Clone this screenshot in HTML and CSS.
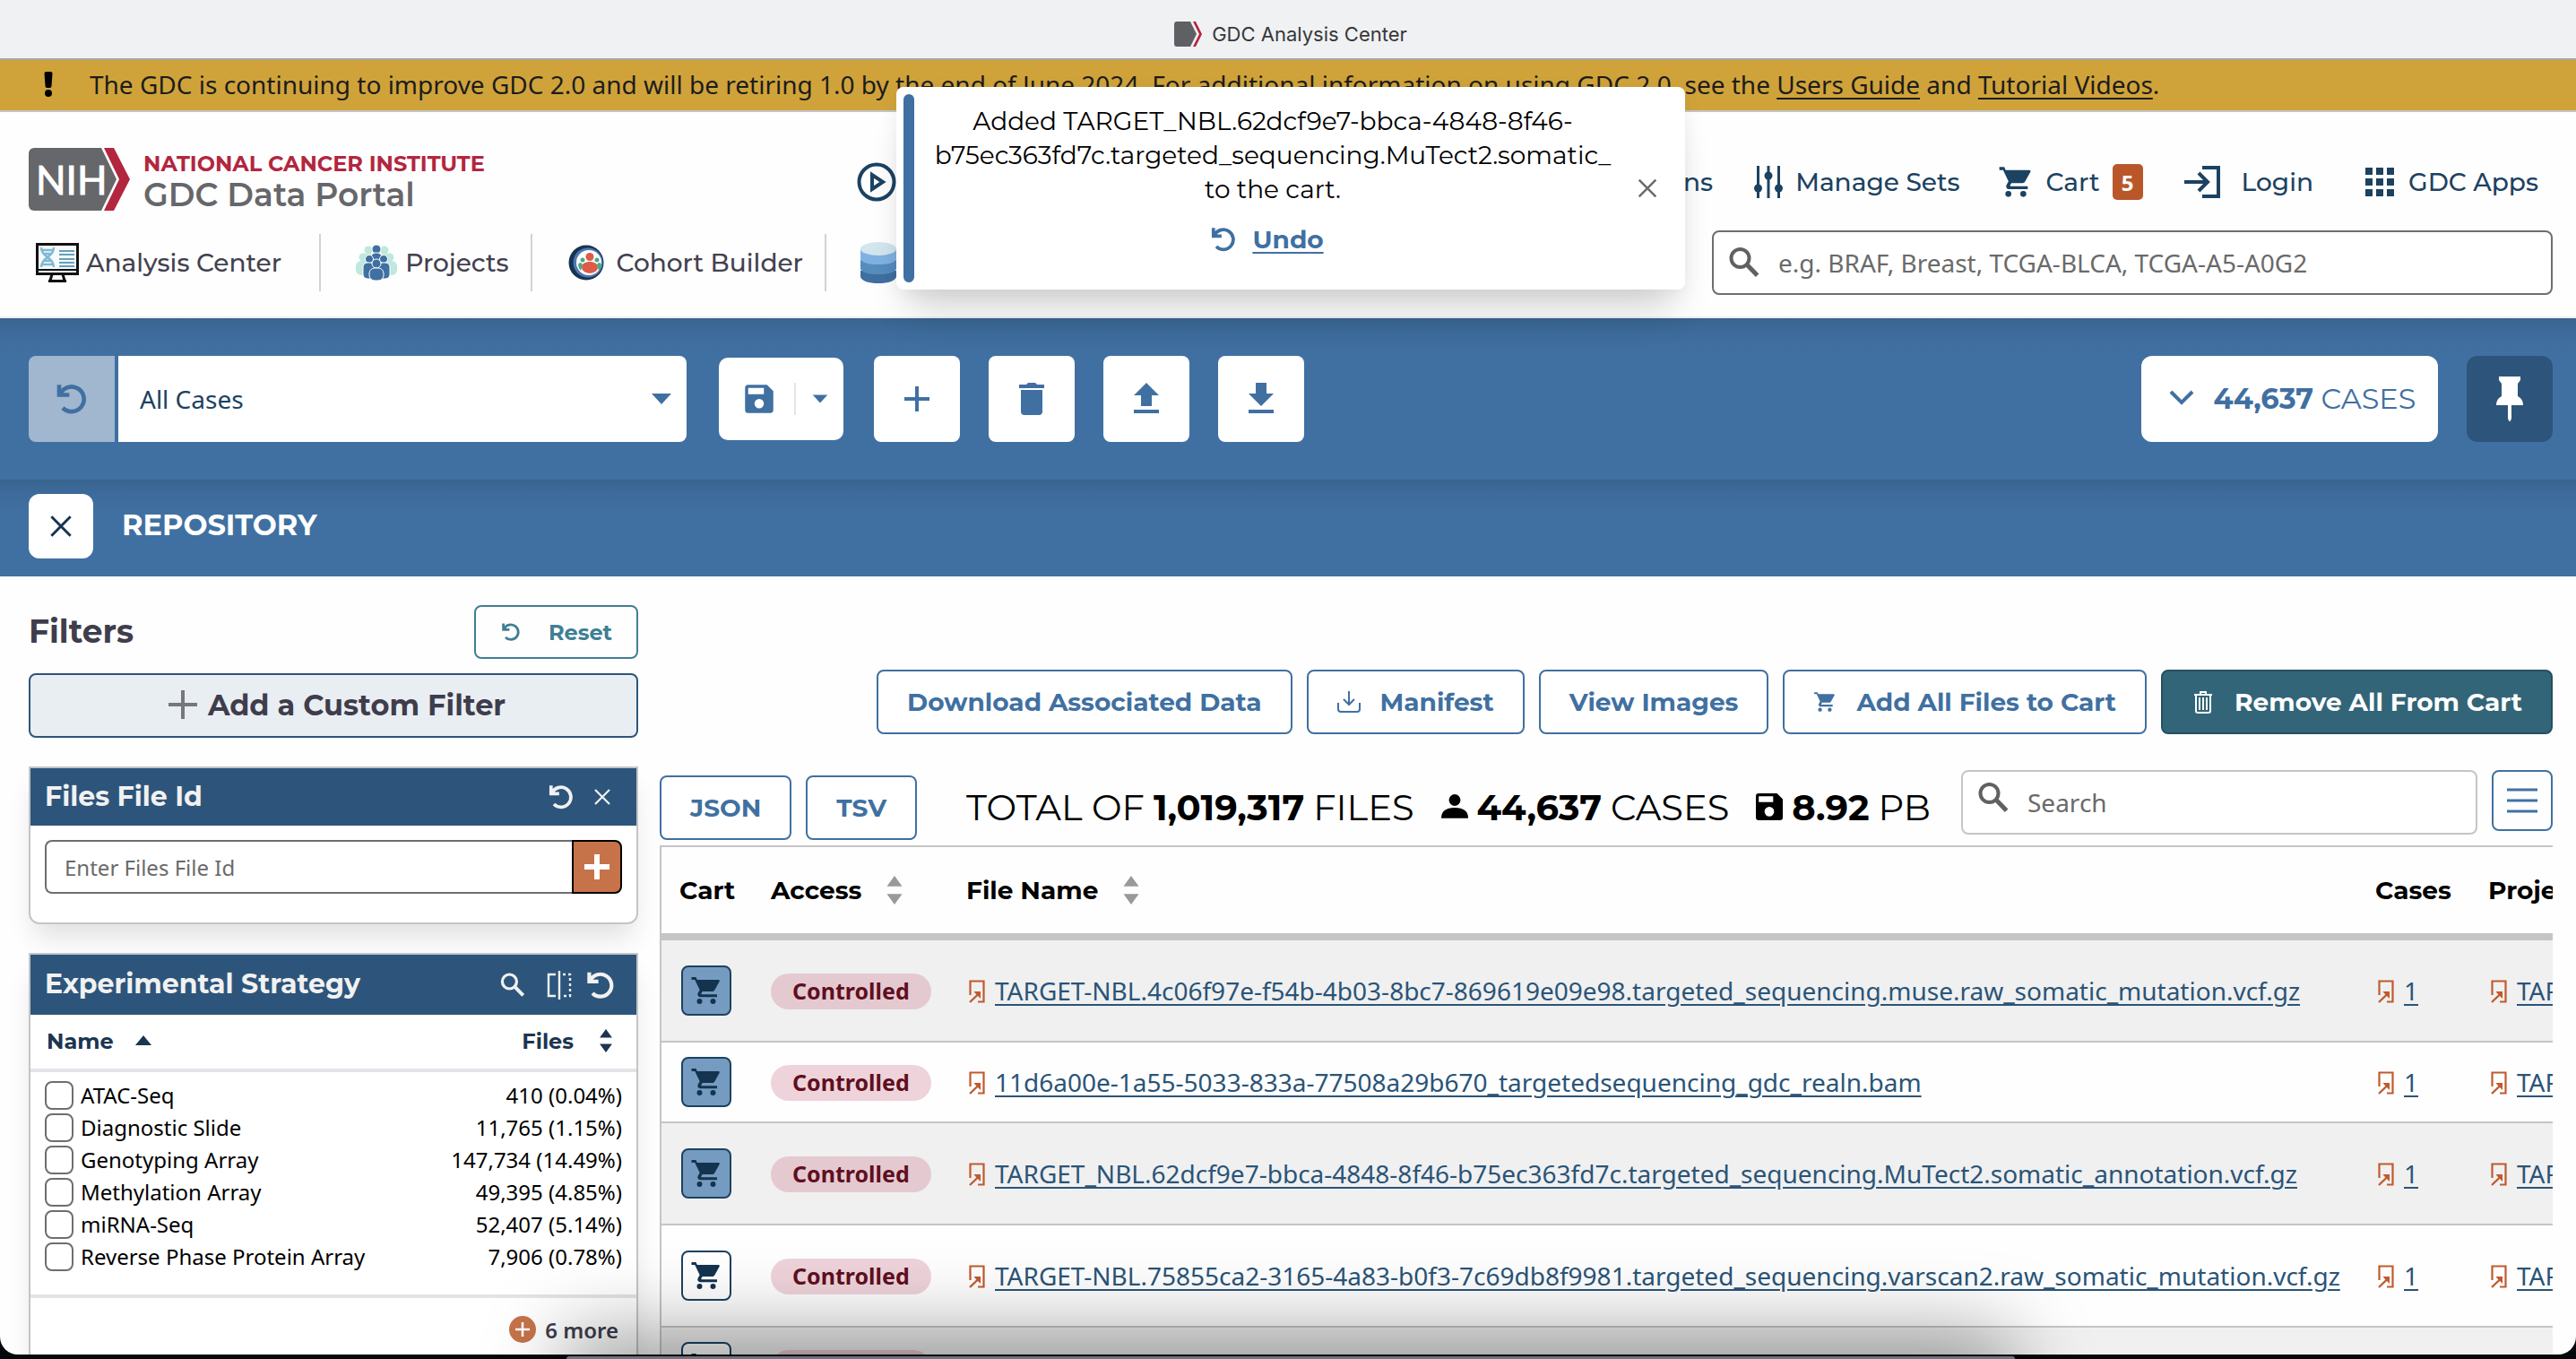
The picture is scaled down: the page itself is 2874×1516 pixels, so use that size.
FILE: index.html
```html
<!DOCTYPE html>
<html lang="en">
<head>
<meta charset="utf-8">
<title>GDC Analysis Center</title>
<link rel="stylesheet" href="styles.css">
</head>
<body>
<svg class="sprite" aria-hidden="true">
  <symbol id="undo" viewBox="0 0 24 24"><path d="M3.6 2.5v6.8h6.8M4.4 8.6A8.3 8.3 0 1 1 6 18" fill="none" stroke="currentColor" stroke-width="2.8"/></symbol>
  <symbol id="close" viewBox="0 0 24 24"><path d="M4 4l16 16M20 4L4 20" fill="none" stroke="currentColor" stroke-width="2.2"/></symbol>
  <symbol id="search" viewBox="0 0 24 24"><circle cx="9.3" cy="9" r="6" fill="none" stroke="currentColor" stroke-width="2.4"/><path d="M13.8 13.4l7 7.2" stroke="currentColor" stroke-width="3"/></symbol>
  <symbol id="cart" viewBox="0 0 24 24"><path fill="currentColor" d="M17 18a2 2 0 1 1 0 4 2 2 0 0 1 0-4M1 2h3.3l.9 2H21a.8.8 0 0 1 .8 1.2l-3.6 6.500c-.3.6-1 1-1.700 1H9.100l-.9 1.600c-.1.3 0 .5.3.500H20v2H7.500a1.900 1.900 0 0 1-1.700-2.900l1.300-2.400L3.500 4H1zm6 16a2 2 0 1 1 0 4 2 2 0 0 1 0-4"/></symbol>
  <symbol id="save" viewBox="0 0 24 24"><path fill="currentColor" fill-rule="evenodd" d="M5 3h12l4 4v12a2 2 0 0 1-2 2H5a2 2 0 0 1-2-2V5a2 2 0 0 1 2-2zm0 2v4h10V5zm7 7a3 3 0 1 0 0 6 3 3 0 0 0 0-6z"/></symbol>
  <symbol id="plus" viewBox="0 0 24 24"><path d="M12 3.600v16.800M3.600 12h16.800" stroke="currentColor" stroke-width="2.400"/></symbol>
  <symbol id="down" viewBox="0 0 24 12"><path fill="currentColor" d="M1 0h22L12 12z"/></symbol>
  <symbol id="sort" viewBox="0 0 16 30"><path fill="currentColor" d="M0 11L8 0l8 11zM0 19l8 11 8-11z"/></symbol>
  <symbol id="out" viewBox="0 0 20 28"><path d="M2.500 18V2.500h15v23H11" fill="none" stroke="currentColor" stroke-width="2.200"/><path d="M2 26L12.500 16" fill="none" stroke="currentColor" stroke-width="2.400"/><path d="M6.500 14H14v8l-2.500-2.500-3-3z" fill="currentColor"/></symbol>
  <symbol id="nih" viewBox="0 0 113 70"><path d="M6 0h75l17 35-17 35H6a6 6 0 0 1-6-6V6a6 6 0 0 1 6-6z" fill="#66676b"/><path d="M84 0h11l18 35-18 35H84l17-35z" fill="#b3263f"/></symbol>
</svg>

<div class="window">
  <div class="titlebar"><svg class="favicon" viewBox="0 0 32 28"><path d="M3 0h15l7 14-7 14H3q-3 0-3-3V3q0-3 3-3z" fill="#5f6063"/><path d="M21 0h3l7 14-7 14h-3l7-14z" fill="#b3263f"/></svg><span>GDC Analysis Center</span></div>

  <div class="banner" role="status">
    <svg class="bang" viewBox="0 0 12 28"><path d="M1.500 2a2 2 0 0 1 2-2h5a2 2 0 0 1 2 2l-1 14a2 2 0 0 1-2 2h-3a2 2 0 0 1-2-2z"/><circle cx="6" cy="24" r="4"/></svg>
    <p>The GDC is continuing to improve GDC 2.0 and will be retiring 1.0 by the end of June 2024. For additional information on using GDC 2.0, see the <a href="#guide">Users Guide</a> and <a href="#videos">Tutorial Videos</a>.</p>
  </div>

  <header class="header">
    <div class="header-top">
      <a class="logo" href="#home">
        <span class="nih-mark"><svg><use href="#nih"/></svg><b>NIH</b></span>
        <span class="logo-text"><span class="nci">NATIONAL CANCER INSTITUTE</span><span class="portal">GDC Data Portal</span></span>
      </a>
      <nav class="links-left">
        <a href="#video"><svg class="i44" viewBox="0 0 44 44" fill="none" stroke="currentColor" stroke-width="4"><circle cx="22" cy="22" r="19.500"/><path d="M17 14v16l12-8z"/></svg>Video Guides</a>
        <a href="#feedback">Send Feedback</a>
        <a href="#annotations">Browse Annotations</a>
      </nav>
      <nav class="links-right">
        <a href="#sets"><svg class="i32" viewBox="0 0 32 36" fill="none" stroke="currentColor" stroke-width="3"><path d="M4.500 0v36M16 0v36M27.500 0v36"/><g fill="currentColor" stroke="none"><circle cx="4.500" cy="25" r="4.500"/><circle cx="16" cy="11" r="4.500"/><circle cx="27.500" cy="25" r="4.500"/></g></svg>Manage Sets</a>
        <a href="#cart"><svg class="i40"><use href="#cart"/></svg>Cart<span class="badge">5</span></a>
        <a class="login" href="#login"><svg class="i40" viewBox="0 0 40 36" fill="none" stroke="currentColor" stroke-width="4"><path d="M20 2h18v32H20M0 18h26M16 8l10 10-10 10"/></svg>Login</a>
        <a class="apps" href="#apps"><svg class="i32" viewBox="0 0 32 32" fill="currentColor"><path d="M0 0h8v8H0zM12 0h8v8h-8zM24 0h8v8h-8zM0 12h8v8H0zM12 12h8v8h-8zM24 12h8v8h-8zM0 24h8v8H0zM12 24h8v8h-8zM24 24h8v8h-8z"/></svg>GDC Apps</a>
      </nav>
    </div>
    <div class="header-bottom">
      <nav class="tabs">
        <a href="#analysis"><svg class="i48" viewBox="0 0 48 44" fill="none"><path d="M1.500 1.500h45v33h-45z" fill="#f5fafc" stroke="#111" stroke-width="3"/><path d="M1 30h46" stroke="#111" stroke-width="2"/><path d="M18 35l-2 7M30 35l2 7M14 42.500h20" stroke="#111" stroke-width="3"/><path d="M6 5c0 11 14 11 14 22M20 5c0 11-14 11-14 22M7 8h12M7 24h12M9 12h8M9 20h8" stroke="#7fb9d4" stroke-width="2.400"/><path d="M26 9h17M26 13h17M26 18h17M26 22h17M26 26h17" stroke="#67a0ba" stroke-width="2"/></svg>Analysis Center</a>
        <a href="#projects"><svg class="i48" viewBox="0 0 48 40"><g fill="#bfe8de"><circle cx="15" cy="6" r="4.500"/><circle cx="33" cy="6" r="4.500"/><circle cx="9" cy="14" r="4.500"/><circle cx="39" cy="14" r="4.500"/><rect x="1" y="18" width="14" height="16" rx="6"/><rect x="33" y="18" width="14" height="16" rx="6"/><rect x="10" y="10" width="10" height="14" rx="4"/><rect x="28" y="10" width="10" height="14" rx="4"/></g><g fill="#3f70a1" stroke="#fff" stroke-width="1"><circle cx="24" cy="5" r="5"/><rect x="18" y="9" width="12" height="14" rx="5"/><circle cx="16" cy="16" r="4.500"/><circle cx="32" cy="16" r="4.500"/><rect x="9" y="20" width="13" height="18" rx="5"/><rect x="26" y="20" width="13" height="18" rx="5"/><circle cx="24" cy="21" r="5"/><rect x="16" y="26" width="16" height="14" rx="6"/></g></svg>Projects</a>
        <a href="#cohort"><svg class="i48" viewBox="-2 -2 48 44"><circle cx="20" cy="20" r="19.500" fill="#173450"/><circle cx="22" cy="20" r="16.500" fill="#4e78b5"/><circle cx="23" cy="20" r="14" fill="#fff"/><circle cx="24" cy="13.500" r="4.500" fill="#dc5c48"/><path d="M15 25c0-8 18-8 18 0 0 9-18 9-18 0z" fill="#dc5c48"/><g fill="#4aa984"><circle cx="16" cy="17" r="2.500"/><circle cx="32" cy="17" r="2.500"/><path d="M11 22q2-4 5 0l-2 7q-3-3-3-7zM37 22q-2-4-5 0l2 7q3-3 3-7z"/></g></svg>Cohort Builder</a>
        <a href="#repository"><svg class="db" viewBox="0 0 40 46"><path d="M0 32h40v7q-3 7-20 7T0 39z" fill="#3f6fa0"/><path d="M0 20h40v10q-3 6-20 6T0 30z" fill="#578cbf"/><path d="M0 8h40v11q-3 6-20 6T0 19z" fill="#7fb2e2"/><ellipse cx="20" cy="7.500" rx="20" ry="7.500" fill="#d3e6ee"/></svg></a>
      </nav>
      <label class="quick-search"><svg class="i40"><use href="#search"/></svg><input type="text" aria-label="Quick search" placeholder="e.g. BRAF, Breast, TCGA-BLCA, TCGA-A5-A0G2"></label>
    </div>
  </header>

  <section class="cohort-bar">
    <div class="cohort-picker">
      <button class="discard" aria-label="Discard changes"><svg class="i40"><use href="#undo"/></svg></button>
      <div class="select-wrap"><select aria-label="Cohort"><option>All Cases</option></select><svg class="caret"><use href="#down"/></svg></div>
    </div>
    <button class="save-btn" aria-label="Save cohort"><svg class="disk"><use href="#save"/></svg><i></i><svg class="caret-sm"><use href="#down"/></svg></button>
    <div class="tools">
      <button class="square" aria-label="Add cohort"><svg class="i40"><use href="#plus"/></svg></button>
      <button class="square" aria-label="Delete cohort"><svg class="i40" viewBox="0 0 40 40" fill="currentColor"><path d="M6 4h8l2-2h8l2 2h8v4H6zM8 10h24v24a4 4 0 0 1-4 4H12a4 4 0 0 1-4-4z"/></svg></button>
      <button class="square" aria-label="Import cohort"><svg class="i40" viewBox="0 0 40 40" fill="currentColor"><path d="M20 2l14 14h-8v12H14V16H6zM6 32h28v4H6z"/></svg></button>
      <button class="square" aria-label="Export cohort"><svg class="i40" viewBox="0 0 40 40" fill="currentColor"><path d="M14 2h12v12h8L20 28 6 14h8zM6 32h28v4H6z"/></svg></button>
    </div>
    <button class="cases-btn"><svg class="chev" viewBox="0 0 28 18"><path d="M2 2l12 12L26 2" fill="none" stroke="currentColor" stroke-width="4"/></svg><span><b>44,637</b> CASES</span></button>
    <button class="pin" aria-label="Pin cohort bar"><svg viewBox="0 0 30 50" fill="#fff"><path d="M3 0h24v4l-3 4v14q6 3 6 10H0q0-7 6-10V8L3 4zM13 32h4v15l-2 4-2-4z"/></svg></button>
  </section>

  <section class="app-bar">
    <button class="app-close" aria-label="Close"><svg><use href="#close"/></svg></button>
    <h1>REPOSITORY</h1>
  </section>

  <main class="content">
    <aside class="filters">
      <div class="filters-head"><h2>Filters</h2><button class="reset"><svg><use href="#undo"/></svg>Reset</button></div>
      <button class="custom-filter"><svg viewBox="0 0 32 32"><path d="M16 0v32M0 16h32" stroke="currentColor" stroke-width="4"/></svg>Add a Custom Filter</button>

      <section class="card">
        <div class="card-head"><h3>Files File Id</h3><button aria-label="Reset"><svg class="i32"><use href="#undo"/></svg></button><button aria-label="Remove"><svg class="i24"><use href="#close"/></svg></button></div>
        <div class="card-form"><input type="text" aria-label="Files File Id" placeholder="Enter Files File Id"><button aria-label="Add"><svg class="i32" viewBox="0 0 32 32"><path d="M16 2v28M2 16h28" stroke="currentColor" stroke-width="6"/></svg></button></div>
      </section>

      <section class="card strategy">
        <div class="card-head"><h3>Experimental Strategy</h3><button class="find" aria-label="Search"><svg class="i32"><use href="#search"/></svg></button><button aria-label="Flip"><svg class="i32" viewBox="0 0 32 32" fill="none" stroke="currentColor" stroke-width="2.400"><path d="M12 4H4v24h8M16 0v32"/><path d="M20 4h8v24h-8" stroke-dasharray="3 3"/></svg></button><button aria-label="Reset"><svg class="i36"><use href="#undo"/></svg></button></div>
        <div class="facet-head"><button>Name<svg viewBox="0 0 24 12"><path d="M0 11L9 0l9 11z"/></svg></button><button>Files<svg class="sort"><use href="#sort"/></svg></button></div>
        <ul class="facet">
          <li><label><input type="checkbox">ATAC-Seq</label><span>410 (0.04%)</span></li>
          <li><label><input type="checkbox">Diagnostic Slide</label><span>11,765 (1.15%)</span></li>
          <li><label><input type="checkbox">Genotyping Array</label><span>147,734 (14.49%)</span></li>
          <li><label><input type="checkbox">Methylation Array</label><span>49,395 (4.85%)</span></li>
          <li><label><input type="checkbox">miRNA-Seq</label><span>52,407 (5.14%)</span></li>
          <li><label><input type="checkbox">Reverse Phase Protein Array</label><span>7,906 (0.78%)</span></li>
        </ul>
        <div class="facet-foot"><button><svg viewBox="0 0 30 30"><circle cx="15" cy="15" r="15" fill="#c6734a"/><path d="M15 7v16M7 15h16" stroke="#fff" stroke-width="2.500"/></svg>6 more</button></div>
      </section>
    </aside>

    <div class="main">
      <div class="actions">
        <button>Download Associated Data</button>
        <button class="manifest"><svg viewBox="0 0 26 26" fill="none" stroke="currentColor" stroke-width="2"><path d="M13 1v15M7 10l6 6 6-6M1 14v7q0 3 3 3h18q3 0 3-3v-7"/></svg>Manifest</button>
        <button>View Images</button>
        <button class="add-all"><svg><use href="#cart"/></svg>Add All Files to Cart</button>
        <button class="remove"><svg viewBox="0 0 26 26" fill="none" stroke="currentColor" stroke-width="2"><path d="M3 5h20M10 5V2h6v3M5 5v18q0 2 2 2h12q2 0 2-2V5M9 8v14M13 8v14M17 8v14"/></svg>Remove All From Cart</button>
      </div>
      <div class="table-tools">
        <button class="export">JSON</button>
        <button class="export">TSV</button>
        <p class="totals"><span>TOTAL OF <b>1,019,317</b> FILES</span><span><svg viewBox="0 0 28 28"><circle cx="14" cy="7" r="6"/><path d="M0 26q0-11 14-11t14 11z"/></svg><b>44,637</b> CASES</span><span><svg viewBox="0 0 28 28"><path fill-rule="evenodd" d="M3 0h19l6 6v19a3 3 0 0 1-3 3H3a3 3 0 0 1-3-3V3a3 3 0 0 1 3-3zm0 3v6h15V3zm11 11a5 5 0 1 0 0 10 5 5 0 0 0 0-10z"/></svg><b>8.92</b> PB</span></p>
        <label class="table-search"><svg class="i40"><use href="#search"/></svg><input type="text" aria-label="Search table" placeholder="Search"></label>
        <button class="columns" aria-label="Columns"><svg viewBox="0 0 34 28"><path d="M0 2h34M0 14h34M0 26h34" stroke="currentColor" stroke-width="3"/></svg></button>
      </div>
      <div class="table-wrap">
        <table>
          <colgroup><col class="c-cart"><col class="c-access"><col><col class="c-cases"><col class="c-project"></colgroup>
          <thead><tr><th>Cart</th><th>Access<svg class="sort"><use href="#sort"/></svg></th><th>File Name<svg class="sort"><use href="#sort"/></svg></th><th>Cases</th><th>Project</th></tr></thead>
          <tbody>
            <tr class="tall"><td><button class="cart-btn in" aria-label="Remove from cart"><svg><use href="#cart"/></svg></button></td><td><span class="pill">Controlled</span></td><td><svg class="out"><use href="#out"/></svg><a href="#f1">TARGET-NBL.4c06f97e-f54b-4b03-8bc7-869619e09e98.targeted_sequencing.muse.raw_somatic_mutation.vcf.gz</a></td><td><svg class="out"><use href="#out"/></svg><a href="#c1">1</a></td><td><svg class="out"><use href="#out"/></svg><a href="#p1">TARGET-NBL</a></td></tr>
            <tr><td><button class="cart-btn in" aria-label="Remove from cart"><svg><use href="#cart"/></svg></button></td><td><span class="pill">Controlled</span></td><td><svg class="out"><use href="#out"/></svg><a href="#f2">11d6a00e-1a55-5033-833a-77508a29b670_targetedsequencing_gdc_realn.bam</a></td><td><svg class="out"><use href="#out"/></svg><a href="#c2">1</a></td><td><svg class="out"><use href="#out"/></svg><a href="#p2">TARGET-NBL</a></td></tr>
            <tr class="tall"><td><button class="cart-btn in" aria-label="Remove from cart"><svg><use href="#cart"/></svg></button></td><td><span class="pill">Controlled</span></td><td><svg class="out"><use href="#out"/></svg><a href="#f3">TARGET_NBL.62dcf9e7-bbca-4848-8f46-b75ec363fd7c.targeted_sequencing.MuTect2.somatic_annotation.vcf.gz</a></td><td><svg class="out"><use href="#out"/></svg><a href="#c3">1</a></td><td><svg class="out"><use href="#out"/></svg><a href="#p3">TARGET-NBL</a></td></tr>
            <tr class="tall"><td><button class="cart-btn" aria-label="Add to cart"><svg><use href="#cart"/></svg></button></td><td><span class="pill">Controlled</span></td><td><svg class="out"><use href="#out"/></svg><a href="#f4">TARGET-NBL.75855ca2-3165-4a83-b0f3-7c69db8f9981.targeted_sequencing.varscan2.raw_somatic_mutation.vcf.gz</a></td><td><svg class="out"><use href="#out"/></svg><a href="#c4">1</a></td><td><svg class="out"><use href="#out"/></svg><a href="#p4">TARGET-NBL</a></td></tr>
            <tr><td><button class="cart-btn" aria-label="Add to cart"><svg><use href="#cart"/></svg></button></td><td><span class="pill">Controlled</span></td><td></td><td></td><td></td></tr>
          </tbody>
        </table>
      </div>
    </div>
  </main>

  <div class="toast" role="alert">
    <div class="toast-bar"></div>
    <div class="toast-body"><p>Added TARGET_NBL.62dcf9e7-bbca-4848-8f46-<br>b75ec363fd7c.targeted_sequencing.MuTect2.somatic_<br>to the cart.</p><button class="undo"><svg class="i32"><use href="#undo"/></svg><span>Undo</span></button></div>
    <button class="toast-close" aria-label="Dismiss"><svg class="i28"><use href="#close"/></svg></button>
  </div>
  <div class="dock-shade"></div>
</div>
<div class="dock"></div>
</body>
</html>
```
FILE: styles.css
```css
* { box-sizing: border-box; }
body { margin: 0; height: 100vh; overflow: hidden; background: #05070c; font-family: "Noto Sans", sans-serif; color: #000; position: relative; }
p, h1, h2, h3, ul { margin: 0; padding: 0; }
button { font: inherit; color: inherit; background: none; border: 0; padding: 0; display: flex; align-items: center; justify-content: center; flex: none; }
input, select { font: inherit; color: inherit; }
svg { flex: none; display: block; }
.sprite { position: absolute; width: 0; height: 0; }
.i24 { width: 24px; height: 24px; }
.i28 { width: 28px; height: 28px; }
.i32 { width: 32px; height: 36px; }
.i36 { width: 36px; height: 36px; }
.i40 { width: 40px; height: 40px; }
.i44 { width: 44px; height: 44px; }
.i48 { width: 48px; height: 44px; }

.window { position: relative; height: calc(100vh - 5px); overflow: hidden; background: #fefefe; border-radius: 0 0 20px 20px; }

.titlebar { height: 67px; padding: 10px 0 0 6px; display: flex; justify-content: center; align-items: center; gap: 10px; background: #f0f1f3; border-bottom: 2px solid #a4a5a8; font: 400 22px Inter, sans-serif; color: #37383a; }
.favicon { width: 32px; height: 28px; }

.banner { height: 58px; display: flex; align-items: center; padding: 0 0 2px 48px; gap: 40px; background: #d0a33a; border-bottom: 2px solid #c5c5c5; font-size: 28px; color: #1c1c1c; }
.banner a { color: inherit; text-underline-offset: 4px; }
.bang { width: 12px; height: 28px; }

.header { position: relative; padding: 40px 26px 24px 32px; border-bottom: 2px solid #f0f0f0; font-family: Montserrat, Inter, sans-serif; font-size: 28px; font-weight: 500; }
.header a { display: flex; align-items: center; text-decoration: none; color: inherit; }
.header-top { display: flex; align-items: center; height: 76px; color: #1c4262; }
.header .logo { gap: 15px; width: 924px; height: 70px; align-self: flex-start; }
.nih-mark { display: grid; width: 113px; height: 70px; }
.nih-mark > * { grid-area: 1 / 1; }
.nih-mark svg { width: 113px; height: 70px; }
.nih-mark b { align-self: center; padding-left: 8px; color: #fff; font: 400 44px/48px Lato, sans-serif; -webkit-text-stroke: 1px #fff; }
.logo-text { display: flex; flex-direction: column; padding-top: 6px; }
.nci { color: #b3263f; font-weight: 700; font-size: 24px; line-height: 28px; }
.portal { color: #66676b; font-weight: 600; font-size: 36px; line-height: 40px; }
.links-left { flex: 1; display: flex; justify-content: space-between; white-space: nowrap; }
.links-left a { gap: 16px; }
.links-right { display: flex; gap: 42px; padding: 0 16px 0 46px; }
.links-right a { gap: 14px; }
.links-right a.login { margin-left: 4px; gap: 24px; }
.links-right a.apps { margin-left: 16px; gap: 16px; }
.badge { display: grid; place-items: center; width: 34px; height: 40px; background: #b9572b; color: #fff; border-radius: 5px; font: 700 24px "Noto Sans", sans-serif; }
.header-bottom { display: flex; align-items: center; justify-content: space-between; margin-top: 16px; }
.tabs { display: flex; color: #43414f; }
.tabs a { height: 64px; gap: 8px; padding: 0 24px 0 38px; border-right: 2px solid #cfd2d8; }
.tabs a:first-child { padding: 0 42px 0 8px; }
.tabs a:last-child { border: 0; }
.db { width: 40px; height: 46px; }
.quick-search { display: flex; align-items: center; gap: 18px; width: 938px; height: 72px; padding-left: 14px; border: 2px solid #6e6e6e; border-radius: 8px; color: #616161; background: #fff; font-family: "Noto Sans", sans-serif; font-size: 28px; font-weight: 400; }
.quick-search input, .table-search input { flex: 1; border: 0; outline: 0; background: none; padding: 0; }
input::placeholder { color: #6a6a6a; opacity: 1; }

.cohort-bar, .app-bar { background: linear-gradient(#38648f, #3d6b9b 16px, #4070a1 36px); }
.cohort-bar { height: 180px; display: flex; align-items: center; padding: 0 26px 0 32px; color: #4070a1; }
.cohort-picker { display: flex; gap: 4px; width: 734px; margin-right: 36px; height: 96px; }
.discard { width: 96px; background: #a1b6cf; border-radius: 8px 0 0 8px; }
.select-wrap { flex: 1; display: grid; align-items: center; background: #fff; border-radius: 0 8px 8px 0; color: #1c4262; font-size: 28px; }
.select-wrap > * { grid-area: 1 / 1; }
.select-wrap select { appearance: none; border: 0; background: none; height: 96px; padding: 0 24px; }
.caret { width: 24px; height: 14px; justify-self: end; margin-right: 16px; color: #4070a1; }
.save-btn { width: 139px; height: 92px; justify-content: flex-start; gap: 18px; padding-left: 24px; margin-right: 34px; background: #fff; border-radius: 10px; }
.save-btn .disk { width: 42px; height: 42px; }
.save-btn i { width: 2px; height: 36px; background: #e3e5e8; }
.save-btn .caret-sm { width: 18px; height: 10px; }
.tools { display: flex; gap: 32px; }
.square { width: 96px; height: 96px; background: #fff; border-radius: 8px; }
.cases-btn { margin-left: auto; width: 331px; height: 96px; gap: 22px; padding: 0 0 2px 6px; background: #fff; border-radius: 12px; font: 400 32px Montserrat, Inter, sans-serif; }
.chev { width: 28px; height: 18px; }
.pin { width: 96px; height: 96px; margin-left: 32px; background: #2d557b; border-radius: 12px; }
.pin svg { width: 30px; height: 50px; }

.app-bar { height: 108px; display: flex; align-items: center; gap: 32px; padding: 0 32px 4px; color: #fff; }
.app-close { width: 72px; height: 72px; background: #fff; border-radius: 12px; color: #14334f; }
.app-close svg { width: 32px; height: 32px; }
h1 { font: 700 32px Montserrat, Inter, sans-serif; padding-bottom: 4px; }

.content { display: flex; gap: 24px; padding: 32px 26px 0 32px; }
.filters { width: 680px; flex: none; }
.filters-head { display: flex; justify-content: space-between; align-items: center; height: 60px; }
h2 { font: 700 36px Montserrat, Inter, sans-serif; color: #3f3d4c; padding-bottom: 2px; }
.reset { width: 183px; height: 60px; gap: 30px; border: 2px solid #3f7f93; border-radius: 8px; color: #3f7f93; font: 700 24px Montserrat, Inter, sans-serif; }
.reset svg { width: 24px; height: 24px; }
.custom-filter { width: 100%; height: 72px; margin-top: 16px; gap: 12px; padding: 0 0 2px 8px; background: #e9eef3; border: 2px solid #2d557b; border-radius: 8px; font: 700 32px Montserrat, Inter, sans-serif; color: #3f3d4c; }
.custom-filter svg { width: 32px; height: 32px; color: #77777c; }
.card { margin-top: 32px; border: 2px solid #c5c5c5; border-radius: 0 0 12px 12px; background: #fff; box-shadow: 0 20px 30px -6px rgba(0,0,0,.12); }
.card-head { display: flex; align-items: center; gap: 18px; height: 64px; padding: 0 26px 0 16px; background: #2d557b; color: #f1f1f1; }
.strategy .card-head { height: 67px; gap: 12px; padding-right: 22px; }
.find { margin-right: 8px; }
.card-head h3 { flex: 1; font: 700 30px Montserrat, Inter, sans-serif; padding-bottom: 2px; }
.card-form { display: flex; padding: 16px 16px 32px; height: 108px; font-size: 24px; }
.card-form input { flex: 1; min-width: 0; border: 2px solid #6e6e6e; border-right: 0; border-radius: 8px 0 0 8px; padding: 0 20px; outline: 0; background: #fff; }
.card-form button { width: 56px; border: 2px solid #000; border-radius: 0 8px 8px 0; background: #c6734a; color: #fff; }
.facet-head { display: flex; justify-content: space-between; height: 64px; padding: 0 26px 2px 18px; border-bottom: 4px solid #e3e3e8; color: #1c3550; font: 700 24px Montserrat, Inter, sans-serif; }
.facet-head button { gap: 24px; }
.facet-head button svg { width: 24px; height: 12px; fill: currentColor; }
.facet-head button .sort { width: 16px; height: 26px; margin-left: 4px; }
.facet { list-style: none; height: 252px; padding: 8px 16px 0; border-bottom: 4px solid #e3e3e8; font-size: 24px; }
.facet li { display: flex; justify-content: space-between; height: 36px; line-height: 36px; }
.facet label { display: flex; align-items: center; gap: 8px; }
.facet input { appearance: none; width: 32px; height: 32px; margin: 0; border: 2px solid #6e6e6e; border-radius: 8px; background: #fff; }
.facet-foot { height: 90px; display: flex; justify-content: flex-end; padding: 0 20px 20px 0; font-size: 24px; font-weight: 600; color: #3f3d4c; }
.facet-foot button { gap: 10px; }
.facet-foot svg { width: 30px; height: 30px; }

.main { flex: 1; min-width: 0; font-family: Montserrat, Inter, sans-serif; }
.actions { display: flex; justify-content: flex-end; gap: 16px; padding-top: 72px; }
.actions button, .export { height: 72px; padding: 0 32px; border: 2px solid #4070a1; border-radius: 8px; color: #4070a1; background: #fff; font-weight: 700; font-size: 28px; gap: 22px; }
.actions svg { width: 26px; height: 26px; }
.actions .remove { background: #336578; border-color: #24505f; color: #fff; }
.table-tools { display: flex; gap: 16px; margin-top: 40px; height: 84px; }
.export { margin-top: 6px; }
.totals { flex: 1; display: flex; justify-content: flex-end; align-items: center; gap: 30px; height: 82px; font-size: 40px; padding-right: 18px; }
.totals span { display: flex; align-items: center; gap: 10px; white-space: nowrap; }
.totals svg { width: 30px; height: 30px; }
.table-search { width: 576px; height: 72px; display: flex; align-items: center; gap: 18px; padding: 0 14px; border: 2px solid #c5c5c5; border-radius: 8px; background: #fff; font-family: "Noto Sans", sans-serif; font-size: 28px; color: #616161; }
.table-search svg { margin-bottom: 10px; }
.columns { width: 68px; height: 68px; border: 2px solid #4070a1; border-radius: 8px; color: #4070a1; }
.columns svg { width: 34px; height: 28px; }
.table-wrap { overflow: hidden; border: solid #c5c5c5; border-width: 2px 0 0 2px; }
table { table-layout: fixed; width: calc(100% + 160px); border-collapse: separate; border-spacing: 0; }
.c-cart { width: 102px; } .c-access { width: 218px; } .c-cases { width: 126px; } .c-project { width: 252px; }
th { height: 104px; padding: 0 0 0 20px; text-align: left; font-weight: 700; font-size: 28px; border-bottom: 8px solid #c5c5c5; white-space: nowrap; }
th .sort { display: inline-block; vertical-align: -6px; width: 18px; height: 32px; margin-left: 28px; color: #999; }
td { height: 90px; padding: 0 0 0 22px; border-bottom: 2px solid #c5c5c5; font-family: "Noto Sans", sans-serif; font-size: 28px; white-space: nowrap; }
td:nth-child(2) { padding-left: 20px; }
.tall td { height: 114px; }
tbody tr:nth-child(odd) { background: #f0f0f0; }
td a { color: #2a5478; text-underline-offset: 4px; }
.cart-btn { width: 56px; height: 56px; border: 2px solid #1c4262; border-radius: 8px; background: #fff; color: #14334f; }
.cart-btn.in { background: #769bc0; }
.cart-btn svg { width: 36px; height: 36px; }
.pill { display: inline-block; height: 40px; line-height: 38px; padding: 0 24px; border-radius: 20px; background: rgba(200,100,125,.28); color: #5f0f1f; font-weight: 700; font-size: 25px; vertical-align: middle; }
.out { display: inline-block; vertical-align: -4px; width: 20px; height: 28px; margin-right: 10px; color: #c05a2c; }

.toast { position: absolute; top: 97px; left: calc(50% - 437px); width: 880px; display: flex; padding: 8px; background: #fff; border-radius: 8px; box-shadow: 0 36px 40px -14px rgba(0,0,0,.16), 0 4px 20px rgba(0,0,0,.06); font: 400 28px/38px Montserrat, Inter, sans-serif; }
.toast-bar { width: 12px; border-radius: 6px; background: #4070a1; }
.toast-body { flex: 1; padding: 11px 0 29px; text-align: center; white-space: nowrap; }
.toast-body p { padding-left: 10px; }
.undo { margin: 18px auto 0; gap: 16px; padding-right: 4px; color: #4070a1; font-weight: 700; text-decoration: underline; text-underline-offset: 4px; }
.toast-close { width: 56px; margin-right: 6px; color: #6c6c6c; }
.dock-shade { position: absolute; bottom: -60px; left: 660px; right: 660px; height: 50px; box-shadow: 0 0 90px 30px rgba(0,0,0,.4); }
.dock { position: absolute; bottom: 0; left: 632px; right: 626px; height: 3px; border-radius: 6px 6px 0 0; background: #707382; }
```
